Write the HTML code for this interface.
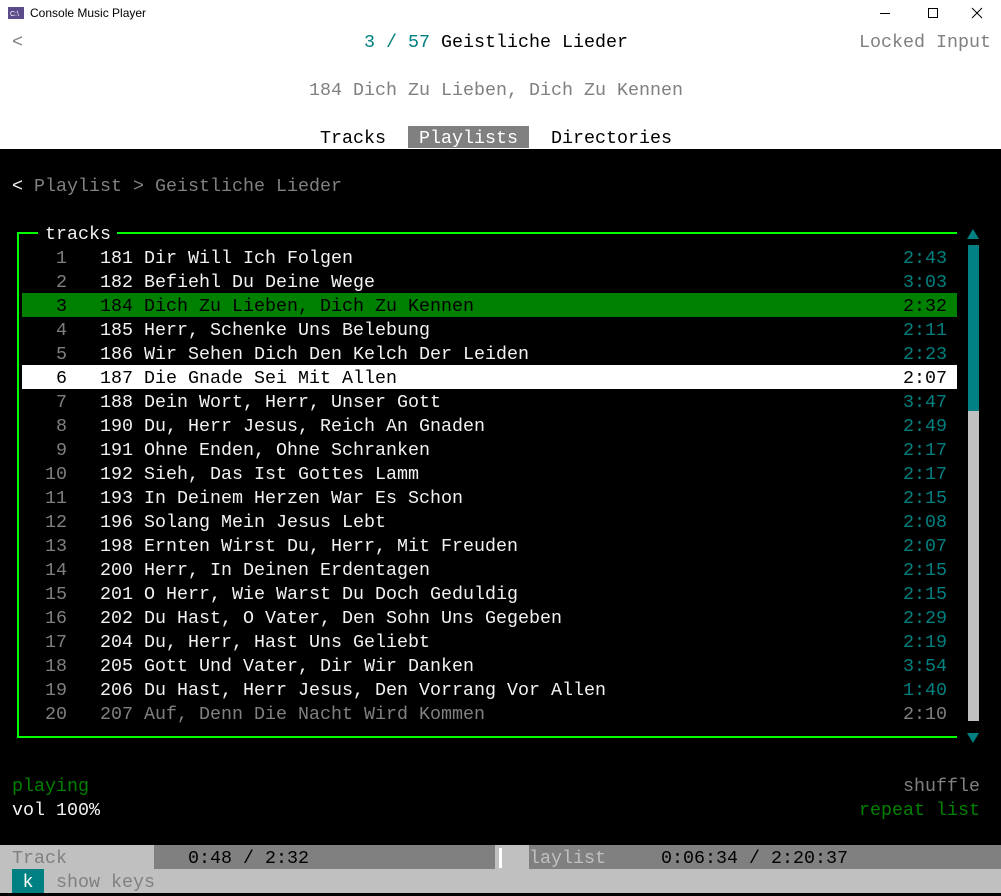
<!DOCTYPE html>
<html><head><meta charset="utf-8"><style>
*{margin:0;padding:0;box-sizing:border-box}
body{width:1001px;height:893px;overflow:hidden;background:#000;position:relative;font-family:"Liberation Mono",monospace;font-size:18.33px}
.top{position:absolute;left:0;top:0;width:1001px;height:149px;background:#fff}
.r{position:absolute;height:24px;line-height:27px;white-space:pre}
.g{color:#808080}.t{color:#008080}.w{color:#f2f2f2}.k{color:#000}.gr{color:#008000}
.tb{position:absolute;top:6px;left:30px;font-family:"Liberation Sans",sans-serif;font-size:12px;color:#000}
</style></head><body>
<div class="top"></div>
<svg style="position:absolute;left:8px;top:7px" width="16" height="12"><rect width="16" height="12" fill="#5c4b8a"/><text x="2" y="9" font-size="7" fill="#fff" font-family="Liberation Sans">C:\</text></svg>
<div class="tb">Console Music Player</div>
<svg style="position:absolute;left:878px;top:6px" width="110" height="14" stroke="#000" stroke-width="1" fill="none"><line x1="2" y1="7.5" x2="12" y2="7.5"/><rect x="50.5" y="2.5" width="9" height="9"/><line x1="94" y1="2" x2="104" y2="12"/><line x1="104" y1="2" x2="94" y2="12"/></svg>

<div class="r g" style="left:12px;top:29px">&lt;</div>
<div class="r" style="left:364px;top:29px"><span class="t">3 / 57</span><span class="k"> Geistliche Lieder</span></div>
<div class="r g" style="left:859px;top:29px">Locked Input</div>
<div class="r g" style="left:309px;top:77px">184 Dich Zu Lieben, Dich Zu Kennen</div>
<div class="r k" style="left:320px;top:125px">Tracks</div>
<div class="r" style="left:408px;top:126px;height:22px;line-height:25px;background:#808080;color:#fff"> Playlists </div>
<div class="r k" style="left:551px;top:125px">Directories</div>

<div class="r" style="left:12px;top:173px"><span class="w">&lt;</span><span class="g"> Playlist &gt; Geistliche Lieder</span></div>

<div style="position:absolute;left:17px;top:232px;width:2px;height:506px;background:#00ff00"></div>
<div style="position:absolute;left:17px;top:232px;width:21px;height:2px;background:#00ff00"></div>
<div style="position:absolute;left:117px;top:232px;width:840px;height:2px;background:#00ff00"></div>
<div style="position:absolute;left:17px;top:736px;width:940px;height:2px;background:#00ff00"></div>
<div class="r w" style="left:45px;top:221px">tracks</div>

<div style="position:absolute;left:22px;top:293px;width:935px;height:24px;background:#008000"></div>
<div style="position:absolute;left:22px;top:365px;width:935px;height:24px;background:#fff"></div>

<svg style="position:absolute;left:966px;top:228px" width="14" height="12"><polygon points="7,1 13,11 1,11" fill="#008080"/></svg>
<div style="position:absolute;left:968px;top:245px;width:11px;height:166px;background:#008080"></div>
<div style="position:absolute;left:968px;top:411px;width:11px;height:310px;background:#c0c0c0"></div>
<svg style="position:absolute;left:966px;top:732px" width="14" height="12"><polygon points="1,1 13,1 7,11" fill="#008080"/></svg>

<div class="r" style="left:1px;top:245px"><span class="g">     1   </span><span class="w">181 Dir Will Ich Folgen</span></div><div class="r t" style="left:903px;top:245px">2:43</div>
<div class="r" style="left:1px;top:269px"><span class="g">     2   </span><span class="w">182 Befiehl Du Deine Wege</span></div><div class="r t" style="left:903px;top:269px">3:03</div>
<div class="r k" style="left:1px;top:293px">     3   184 Dich Zu Lieben, Dich Zu Kennen</div><div class="r k" style="left:903px;top:293px">2:32</div>
<div class="r" style="left:1px;top:317px"><span class="g">     4   </span><span class="w">185 Herr, Schenke Uns Belebung</span></div><div class="r t" style="left:903px;top:317px">2:11</div>
<div class="r" style="left:1px;top:341px"><span class="g">     5   </span><span class="w">186 Wir Sehen Dich Den Kelch Der Leiden</span></div><div class="r t" style="left:903px;top:341px">2:23</div>
<div class="r k" style="left:1px;top:365px">     6   187 Die Gnade Sei Mit Allen</div><div class="r k" style="left:903px;top:365px">2:07</div>
<div class="r" style="left:1px;top:389px"><span class="g">     7   </span><span class="w">188 Dein Wort, Herr, Unser Gott</span></div><div class="r t" style="left:903px;top:389px">3:47</div>
<div class="r" style="left:1px;top:413px"><span class="g">     8   </span><span class="w">190 Du, Herr Jesus, Reich An Gnaden</span></div><div class="r t" style="left:903px;top:413px">2:49</div>
<div class="r" style="left:1px;top:437px"><span class="g">     9   </span><span class="w">191 Ohne Enden, Ohne Schranken</span></div><div class="r t" style="left:903px;top:437px">2:17</div>
<div class="r" style="left:1px;top:461px"><span class="g">    10   </span><span class="w">192 Sieh, Das Ist Gottes Lamm</span></div><div class="r t" style="left:903px;top:461px">2:17</div>
<div class="r" style="left:1px;top:485px"><span class="g">    11   </span><span class="w">193 In Deinem Herzen War Es Schon</span></div><div class="r t" style="left:903px;top:485px">2:15</div>
<div class="r" style="left:1px;top:509px"><span class="g">    12   </span><span class="w">196 Solang Mein Jesus Lebt</span></div><div class="r t" style="left:903px;top:509px">2:08</div>
<div class="r" style="left:1px;top:533px"><span class="g">    13   </span><span class="w">198 Ernten Wirst Du, Herr, Mit Freuden</span></div><div class="r t" style="left:903px;top:533px">2:07</div>
<div class="r" style="left:1px;top:557px"><span class="g">    14   </span><span class="w">200 Herr, In Deinen Erdentagen</span></div><div class="r t" style="left:903px;top:557px">2:15</div>
<div class="r" style="left:1px;top:581px"><span class="g">    15   </span><span class="w">201 O Herr, Wie Warst Du Doch Geduldig</span></div><div class="r t" style="left:903px;top:581px">2:15</div>
<div class="r" style="left:1px;top:605px"><span class="g">    16   </span><span class="w">202 Du Hast, O Vater, Den Sohn Uns Gegeben</span></div><div class="r t" style="left:903px;top:605px">2:29</div>
<div class="r" style="left:1px;top:629px"><span class="g">    17   </span><span class="w">204 Du, Herr, Hast Uns Geliebt</span></div><div class="r t" style="left:903px;top:629px">2:19</div>
<div class="r" style="left:1px;top:653px"><span class="g">    18   </span><span class="w">205 Gott Und Vater, Dir Wir Danken</span></div><div class="r t" style="left:903px;top:653px">3:54</div>
<div class="r" style="left:1px;top:677px"><span class="g">    19   </span><span class="w">206 Du Hast, Herr Jesus, Den Vorrang Vor Allen</span></div><div class="r t" style="left:903px;top:677px">1:40</div>
<div class="r g" style="left:1px;top:701px">    20   207 Auf, Denn Die Nacht Wird Kommen</div><div class="r g" style="left:903px;top:701px">2:10</div>

<div class="r gr" style="left:12px;top:773px">playing</div>
<div class="r g" style="left:903px;top:773px">shuffle</div>
<div class="r w" style="left:12px;top:797px">vol 100%</div>
<div class="r gr" style="left:859px;top:797px">repeat list</div>

<div style="position:absolute;left:0;top:845px;width:1001px;height:48px;background:#c0c0c0"></div>
<div style="position:absolute;left:154px;top:845px;width:341px;height:24px;background:#808080"></div>
<div style="position:absolute;left:529px;top:845px;width:472px;height:24px;background:#808080"></div>
<div class="r g" style="left:12px;top:845px">Track</div>
<div class="r k" style="left:188px;top:845px">0:48 / 2:32</div>
<div style="position:absolute;left:499px;top:848px;width:3px;height:20px;background:#fff"></div>
<div class="r" style="left:518px;top:845px;color:#c0c0c0">Playlist</div>
<div class="r k" style="left:661px;top:845px">0:06:34 / 2:20:37</div>
<div class="r" style="left:12px;top:869px;width:32px;background:#008080;color:#fff;text-align:center">k</div>
<div class="r g" style="left:56px;top:869px">show keys</div>
</body></html>
